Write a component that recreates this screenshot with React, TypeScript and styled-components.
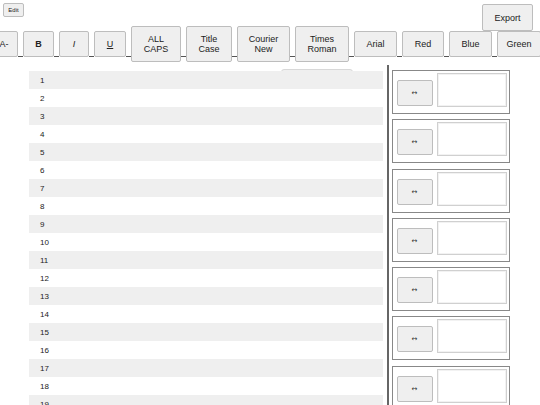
import React from 'react';
import styled, {createGlobalStyle} from 'styled-components';

const Global = createGlobalStyle`
  html, body {
    margin: 0;
    padding: 0;
    background: #fff;
    overflow: hidden;
    font-family: "Liberation Sans", Arial, sans-serif;
    color: #222;
  }
`;

const Page = styled.div`
  width: 540px;
  height: 405px;
  overflow: hidden;
`;

const TopBar = styled.div`
  height: 26px;
  display: flex;
  justify-content: space-between;
  align-items: flex-start;
`;

const SmallButton = styled.button`
  margin: 3px 0 0 3px;
  width: 21px;
  height: 14px;
  padding: 0;
  font-family: inherit;
  font-size: 6px;
  color: #222;
  background: #efefef;
  border: 1px solid #bdbdbd;
  border-radius: 2px;
`;

const ExportButton = styled.button`
  margin: 4px 7px 0 0;
  width: 51px;
  height: 27px;
  padding: 0;
  font-family: inherit;
  font-size: 9px;
  color: #222;
  background: #efefef;
  border: 1px solid #bdbdbd;
  border-radius: 2px;
  flex-shrink: 0;
`;

const Toolbar = styled.div`
  display: flex;
  align-items: center;
  margin-left: -10px;
  height: 36px;
  width: 600px;
`;

const ToolButton = styled.button<{$w: number; $bold?: boolean; $italic?: boolean; $under?: boolean}>`
  width: ${p => p.$w}px;
  flex-shrink: 0;
  padding: 7px 0;
  font-family: inherit;
  font-size: 9px;
  line-height: 10px;
  white-space: pre-line;
  color: #222;
  background: #efefef;
  border: 1px solid #bdbdbd;
  border-radius: 2px;
  font-weight: ${p => (p.$bold ? 'bold' : 'normal')};
  font-style: ${p => (p.$italic ? 'italic' : 'normal')};
  text-decoration: ${p => (p.$under ? 'underline' : 'none')};
`;

const Joint = styled.span`
  width: 5px;
  height: 1px;
  flex-shrink: 0;
  margin-top: 24px;
  background: #555;
`;

const Main = styled.div`
  display: flex;
  align-items: flex-start;
`;

const List = styled.div`
  position: relative;
  margin-left: 29px;
  width: 354px;
  padding-top: 9px;
  flex-shrink: 0;
`;

const Ghost = styled.div`
  position: absolute;
  top: 7px;
  left: 252px;
  width: 70px;
  height: 14px;
  background: #efefef;
  border: 1px solid #d8d8d8;
  border-radius: 3px;
`;

const Row = styled.div<{$odd: boolean}>`
  position: relative;
  height: 18px;
  display: flex;
  align-items: center;
  padding-left: 11px;
  font-size: 8px;
  color: #222;
  background: ${p => (p.$odd ? '#efefef' : '#fff')};
`;

const Divider = styled.div`
  margin: 3px 0 0 4px;
  width: 1.5px;
  height: 400px;
  background: #666;
  flex-shrink: 0;
`;

const Cards = styled.div`
  display: flex;
  flex-direction: column;
  gap: 5.3px;
  margin-left: 3px;
  padding-top: 8px;
`;

const Card = styled.div`
  box-sizing: border-box;
  width: 118px;
  height: 44px;
  display: flex;
  align-items: flex-end;
  gap: 4px;
  padding: 2px 2px 6px 4px;
  border: 1px solid #888;
`;

const SwapButton = styled.button`
  width: 36px;
  height: 26px;
  margin-bottom: 1px;
  padding: 0;
  font-family: "DejaVu Sans", sans-serif;
  font-size: 7px;
  color: #333;
  background: #efefef;
  border: 1px solid #bdbdbd;
  border-radius: 2px;
`;

const Field = styled.div`
  box-sizing: border-box;
  width: 70px;
  height: 34px;
  background: #fff;
  border: 1px solid #d0d0d0;
  box-shadow: inset 0 0 0 1px #f2f2f2;
`;

const tools = [
  {label: 'A-', w: 28},
  {label: 'B', w: 31, bold: true},
  {label: 'I', w: 30, italic: true},
  {label: 'U', w: 32, under: true},
  {label: 'ALL\nCAPS', w: 50},
  {label: 'Title\nCase', w: 46},
  {label: 'Courier\nNew', w: 53},
  {label: 'Times\nRoman', w: 54},
  {label: 'Arial', w: 43},
  {label: 'Red', w: 42},
  {label: 'Blue', w: 43},
  {label: 'Green', w: 44},
];

export default function App() {
  const rows = Array.from({length: 24}, (_, i) => i + 1);
  const cards = Array.from({length: 8}, (_, i) => i);
  return (
    <Page>
      <Global/>
      <TopBar>
        <SmallButton>Edit</SmallButton>
        <ExportButton>Export</ExportButton>
      </TopBar>
      <Toolbar>
        {tools.map((t, i) => (
          <React.Fragment key={t.label}>
            {i > 0 && <Joint/>}
            <ToolButton $w={t.w} $bold={t.bold} $italic={t.italic} $under={t.under}>
              {t.label}
            </ToolButton>
          </React.Fragment>
        ))}
      </Toolbar>
      <Main>
        <List>
          <Ghost/>
          {rows.map(n => (
            <Row key={n} $odd={n % 2 === 1}>{n}</Row>
          ))}
        </List>
        <Divider/>
        <Cards>
          {cards.map(c => (
            <Card key={c}>
              <SwapButton>↔</SwapButton>
              <Field/>
            </Card>
          ))}
        </Cards>
      </Main>
    </Page>
  );
}
